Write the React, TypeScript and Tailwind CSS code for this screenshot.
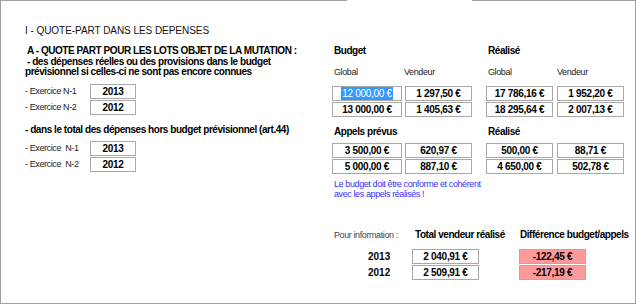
import React from "react";

const F = "font-['Liberation_Sans',Arial,sans-serif]";

function Box({ children, w = "w-[67px]", red = false, sel = false }: { children: React.ReactNode; w?: string; red?: boolean; sel?: boolean }) {
  return (
    <div
      className={`${w} h-[15px] border ${red ? "bg-[#ff9a9a] border-[#c8a0a0]" : "bg-white border-[#a8a8a8]"} flex items-center justify-center text-[10px] leading-[13px] font-bold tracking-[-0.3px]`}
    >
      {sel ? <span className="bg-[#3399ff] text-white font-normal px-[1px]">{children}</span> : children}
    </div>
  );
}

function Label({ children, w }: { children: React.ReactNode; w: string }) {
  return <div className={`${w} text-[9px] leading-[11px] tracking-[-0.4px] text-[#222]`}>{children}</div>;
}

export default function App() {
  return (
    <div className={`w-[636px] h-[304px] bg-white text-black ${F} flex flex-col`}>
      <div className="flex h-px">
        <div className="w-[347px] bg-[#a0a0a0]" />
        <div className="w-[125px]" />
        <div className="flex-1 bg-[#a0a0a0]" />
      </div>
      <div className="flex-1 border-l border-r border-b border-[#a0a0a0] flex">
        {/* left column */}
        <div className="w-[331px] pl-[24px] flex flex-col">
          <div className="mt-[24px] text-[10px] leading-[12px] tracking-[-0.05px] text-[#111]">I - QUOTE-PART DANS LES DEPENSES</div>
          <div className="mt-[8px] ml-[2px] text-[10px] leading-[12px] font-bold tracking-[-0.45px]">A - QUOTE PART POUR LES LOTS OBJET DE LA MUTATION :</div>
          <div className="ml-[2px] text-[10px] leading-[10px] font-bold tracking-[-0.45px]">- des dépenses réelles ou des provisions dans le budget</div>
          <div className="text-[10px] leading-[10px] font-bold tracking-[-0.45px]">prévisionnel si celles-ci ne sont pas encore connues</div>
          <div className="mt-[7px] flex flex-col gap-[1px]">
            <div className="flex items-center">
              <Label w="w-[65px]">- Exercice N-1</Label>
              <Box w="w-[46px]">2013</Box>
            </div>
            <div className="flex items-center">
              <Label w="w-[65px]">- Exercice N-2</Label>
              <Box w="w-[46px]">2012</Box>
            </div>
          </div>
          <div className="mt-[9px] text-[10px] leading-[12px] font-bold tracking-[-0.45px]">- dans le total des dépenses hors budget prévisionnel (art.44)</div>
          <div className="mt-[5px] flex flex-col gap-[1px]">
            <div className="flex items-center">
              <Label w="w-[65px]">- Exercice&nbsp; N-1</Label>
              <Box w="w-[46px]">2013</Box>
            </div>
            <div className="flex items-center">
              <Label w="w-[65px]">- Exercice&nbsp; N-2</Label>
              <Box w="w-[46px]">2012</Box>
            </div>
          </div>
        </div>

        {/* right column */}
        <div className="flex-1 flex flex-col">
          <div className="mt-[44px] flex text-[10px] leading-[12px] font-bold tracking-[-0.45px]">
            <div className="w-[154px] pl-[2px]">Budget</div>
            <div className="pl-[2px]">Réalisé</div>
          </div>
          <div className="mt-[10px] flex">
            <Label w="w-[72px] pl-[2px]">Global</Label>
            <Label w="w-[82px]">Vendeur</Label>
            <Label w="w-[70px] pl-[2px]">Global</Label>
            <Label w="w-[70px] pl-[1px]">Vendeur</Label>
          </div>
          <div className="mt-[8px] flex flex-col gap-[1px]">
            <div className="flex">
              <Box w="w-[70px]" sel>12 000,00 €</Box>
              <div className="w-[3px]" />
              <Box>1 297,50 €</Box>
              <div className="w-[14px]" />
              <Box>17 786,16 €</Box>
              <div className="w-[4px]" />
              <Box>1 952,20 €</Box>
            </div>
            <div className="flex">
              <Box w="w-[70px]">13 000,00 €</Box>
              <div className="w-[3px]" />
              <Box>1 405,63 €</Box>
              <div className="w-[14px]" />
              <Box>18 295,64 €</Box>
              <div className="w-[4px]" />
              <Box>2 007,13 €</Box>
            </div>
          </div>
          <div className="mt-[9px] flex text-[10px] leading-[12px] font-bold tracking-[-0.45px]">
            <div className="w-[154px] pl-[2px]">Appels prévus</div>
            <div className="pl-[2px]">Réalisé</div>
          </div>
          <div className="mt-[5px] flex flex-col gap-[1px]">
            <div className="flex">
              <Box w="w-[70px]">3 500,00 €</Box>
              <div className="w-[3px]" />
              <Box>620,97 €</Box>
              <div className="w-[14px]" />
              <Box>500,00 €</Box>
              <div className="w-[4px]" />
              <Box>88,71 €</Box>
            </div>
            <div className="flex">
              <Box w="w-[70px]">5 000,00 €</Box>
              <div className="w-[3px]" />
              <Box>887,10 €</Box>
              <div className="w-[14px]" />
              <Box>4 650,00 €</Box>
              <div className="w-[4px]" />
              <Box>502,78 €</Box>
            </div>
          </div>
          <div className="mt-[5px] pl-[2px] text-[9px] leading-[10px] tracking-[-0.4px] text-[#3333ff]">
            <div>Le budget doit être conforme et cohérent</div>
            <div>avec les appels réalisés !</div>
          </div>
          <div className="mt-[30px] flex items-end">
            <Label w="w-[83px] pl-[2px] text-[#444]">Pour information :</Label>
            <div className="w-[105px] text-[10px] leading-[12px] font-bold tracking-[-0.45px]">Total vendeur réalisé</div>
            <div className="text-[10px] leading-[12px] font-bold tracking-[-0.45px]">Différence budget/appels</div>
          </div>
          <div className="mt-[8px] flex flex-col gap-[1px]">
            <div className="flex items-center">
              <div className="w-[80px] pl-[36px] text-[10px] leading-[12px] font-bold">2013</div>
              <Box>2 040,91 €</Box>
              <div className="w-[40px]" />
              <Box red>-122,45 €</Box>
            </div>
            <div className="flex items-center">
              <div className="w-[80px] pl-[36px] text-[10px] leading-[12px] font-bold">2012</div>
              <Box>2 509,91 €</Box>
              <div className="w-[40px]" />
              <Box red>-217,19 €</Box>
            </div>
          </div>
        </div>
      </div>
    </div>
  );
}
